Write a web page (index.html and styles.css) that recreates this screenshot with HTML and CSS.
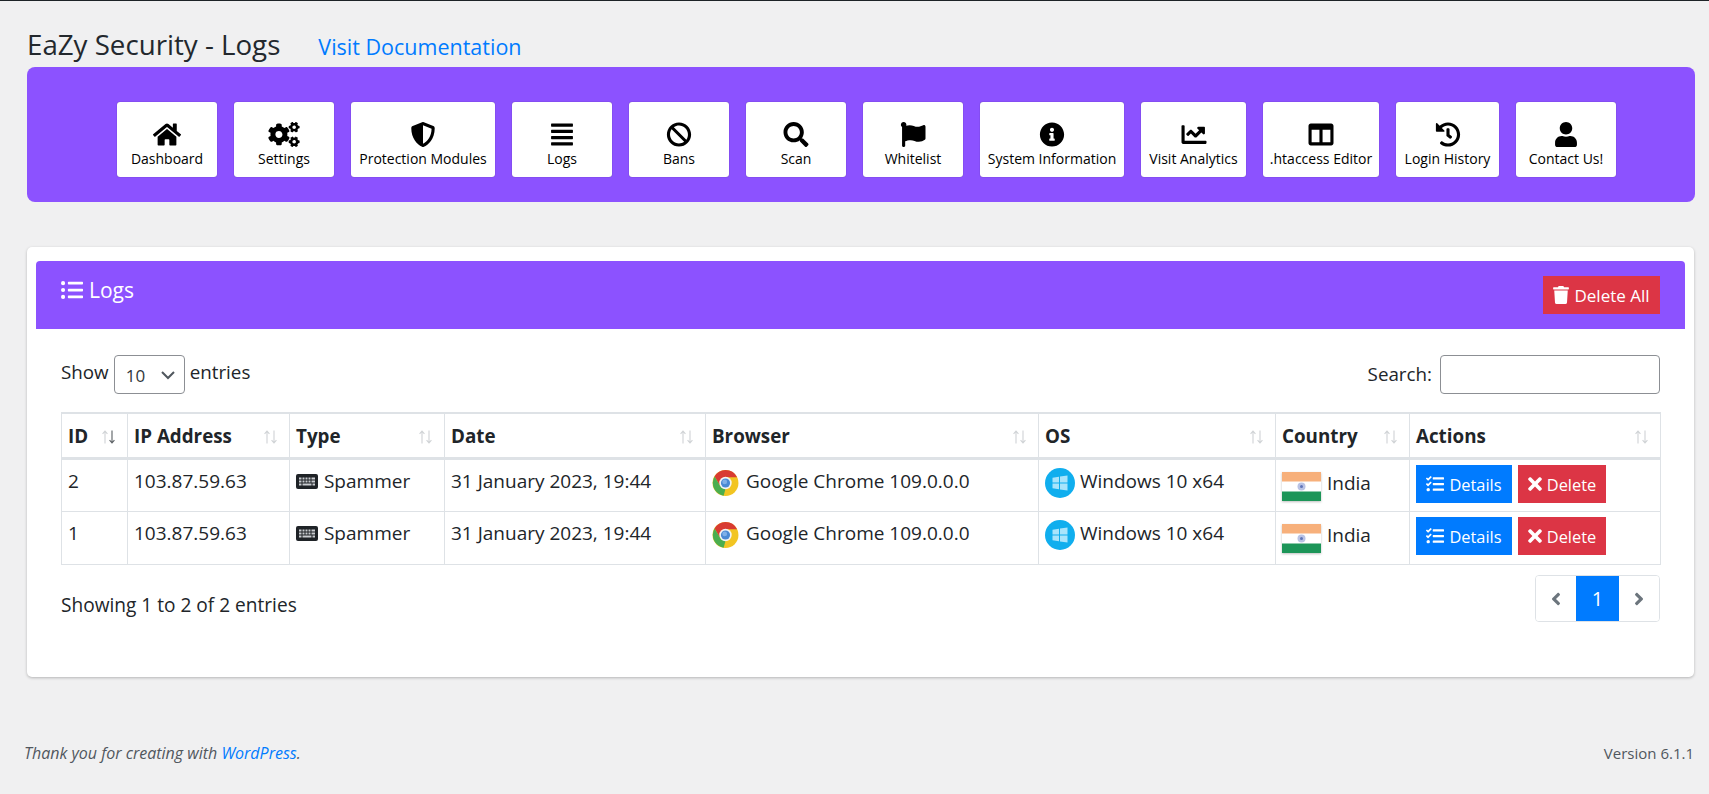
FILE: index.html
```html
<!DOCTYPE html>
<html lang="en">
<head>
<meta charset="utf-8">
<title>EaZy Security - Logs</title>
<link rel="stylesheet" href="styles.css">
</head>
<body>
<svg class="sprite" aria-hidden="true">
<symbol id="i-home" viewBox="0 0 576 512"><path d="M280.37 148.26L96 300.11V464a16 16 0 0 0 16 16l112.06-.29a16 16 0 0 0 15.92-16V368a16 16 0 0 1 16-16h64a16 16 0 0 1 16 16v95.64a16 16 0 0 0 16 16.05L464 480a16 16 0 0 0 16-16V300L295.67 148.26a12.19 12.19 0 0 0-15.3 0zM571.6 251.47L488 182.56V44.05a12 12 0 0 0-12-12h-56a12 12 0 0 0-12 12v72.61L318.47 43a48 48 0 0 0-61 0L4.34 251.47a12 12 0 0 0-1.6 16.9l25.5 31A12 12 0 0 0 45.15 301l235.22-193.74a12.19 12.19 0 0 1 15.3 0L530.9 301a12 12 0 0 0 16.9-1.6l25.5-31a12 12 0 0 0-1.7-16.93z"/></symbol>
<symbol id="i-cogs" viewBox="0 0 640 512"><path d="M512.1 191l-8.2 14.3c-3 5.3-9.4 7.5-15.1 5.4-11.8-4.4-22.6-10.7-32.1-18.6-4.6-3.8-5.8-10.5-2.8-15.7l8.2-14.3c-6.9-8-12.3-17.3-15.9-27.4h-16.5c-6 0-11.2-4.3-12.2-10.3-2-12-2.1-24.6 0-37.1 1-6 6.2-10.4 12.2-10.4h16.5c3.6-10.1 9-19.4 15.9-27.4l-8.2-14.3c-3-5.2-1.9-11.9 2.8-15.7 9.5-7.9 20.4-14.2 32.1-18.6 5.7-2.1 12.1.1 15.1 5.4l8.2 14.3c10.5-1.9 21.2-1.9 31.7 0L552 6.3c3-5.3 9.4-7.5 15.1-5.4 11.8 4.4 22.6 10.7 32.1 18.6 4.6 3.8 5.8 10.5 2.8 15.7l-8.2 14.3c6.9 8 12.3 17.3 15.9 27.4h16.5c6 0 11.2 4.3 12.2 10.3 2 12 2.1 24.6 0 37.1-1 6-6.2 10.4-12.2 10.4h-16.5c-3.6 10.1-9 19.4-15.9 27.4l8.2 14.3c3 5.2 1.9 11.9-2.8 15.7-9.5 7.9-20.4 14.2-32.1 18.6-5.7 2.1-12.1-.1-15.1-5.4l-8.2-14.3c-10.4 1.9-21.2 1.9-31.7 0zm-10.5-58.8c38.5 29.6 82.4-14.3 52.8-52.8-38.5-29.7-82.4 14.3-52.8 52.8zM386.3 286.1l33.7 16.8c10.1 5.8 14.5 18.1 10.5 29.1-8.9 24.2-26.4 46.4-42.6 65.8-7.4 8.9-20.2 11.1-30.3 5.3l-29.1-16.8c-16 13.7-34.6 24.6-54.9 31.7v33.6c0 11.6-8.3 21.6-19.7 23.6-24.6 4.2-50.4 4.4-75.9 0-11.5-2-20-11.9-20-23.6V418c-20.3-7.2-38.9-18-54.9-31.7L74 403c-10 5.8-22.9 3.6-30.3-5.3-16.2-19.4-33.3-41.6-42.2-65.7-4-10.9.4-23.2 10.5-29.1l33.3-16.8c-3.9-20.9-3.9-42.4 0-63.4L12 205.8c-10.1-5.8-14.6-18.1-10.5-29 8.9-24.2 26-46.4 42.2-65.8 7.4-8.9 20.2-11.1 30.3-5.3l29.1 16.8c16-13.7 34.6-24.6 54.9-31.7V57.1c0-11.5 8.2-21.5 19.6-23.5 24.6-4.2 50.5-4.4 76-.1 11.5 2 20 11.9 20 23.6v33.6c20.3 7.2 38.9 18 54.9 31.7l29.1-16.8c10-5.8 22.9-3.6 30.3 5.3 16.2 19.4 33.2 41.6 42.1 65.8 4 10.9.1 23.2-10 29.1l-33.7 16.8c3.9 21 3.9 42.5 0 63.5zm-117.6 21.1c59.2-77-28.7-164.9-105.7-105.7-59.2 77 28.7 164.9 105.7 105.7zm243.4 182.7l-8.2 14.3c-3 5.3-9.4 7.5-15.1 5.4-11.8-4.4-22.6-10.7-32.1-18.6-4.6-3.8-5.8-10.5-2.8-15.7l8.2-14.3c-6.9-8-12.3-17.3-15.9-27.4h-16.5c-6 0-11.2-4.3-12.2-10.3-2-12-2.1-24.6 0-37.1 1-6 6.2-10.4 12.2-10.4h16.5c3.6-10.1 9-19.4 15.9-27.4l-8.2-14.3c-3-5.2-1.9-11.9 2.8-15.7 9.5-7.9 20.4-14.2 32.1-18.6 5.7-2.1 12.1.1 15.1 5.4l8.2 14.3c10.5-1.9 21.2-1.9 31.7 0l8.2-14.3c3-5.3 9.4-7.5 15.1-5.4 11.8 4.4 22.6 10.7 32.1 18.6 4.6 3.8 5.8 10.5 2.8 15.7l-8.2 14.3c6.9 8 12.3 17.3 15.9 27.4h16.5c6 0 11.2 4.3 12.2 10.3 2 12 2.1 24.6 0 37.1-1 6-6.2 10.4-12.2 10.4h-16.5c-3.6 10.1-9 19.4-15.9 27.4l8.2 14.3c3 5.2 1.9 11.9-2.8 15.7-9.5 7.9-20.4 14.2-32.1 18.6-5.7 2.1-12.1-.1-15.1-5.4l-8.2-14.3c-10.4 1.9-21.2 1.9-31.7 0zM501.6 431c38.5 29.6 82.4-14.3 52.8-52.8-38.5-29.6-82.4 14.3-52.8 52.8z"/></symbol>
<symbol id="i-shield" viewBox="0 0 512 512"><path d="M466.5 83.7l-192-80a48.15 48.15 0 0 0-36.9 0l-192 80C27.7 91.1 16 108.6 16 128c0 198.5 114.5 335.7 221.5 380.3 11.8 4.9 25.1 4.9 36.9 0C360.1 472.6 496 349.3 496 128c0-19.4-11.7-36.9-29.5-44.3zM256.1 446.3l-.1-381 175.9 73.3c-3.3 151.4-82.1 261.1-175.8 307.7z"/></symbol>
<symbol id="i-justify" viewBox="0 0 448 512"><path d="M12 32h424a12 12 0 0 1 12 12v40a12 12 0 0 1-12 12H12A12 12 0 0 1 0 84V44a12 12 0 0 1 12-12zm0 128h424a12 12 0 0 1 12 12v40a12 12 0 0 1-12 12H12a12 12 0 0 1-12-12v-40a12 12 0 0 1 12-12zm0 128h424a12 12 0 0 1 12 12v40a12 12 0 0 1-12 12H12a12 12 0 0 1-12-12v-40a12 12 0 0 1 12-12zm0 128h424a12 12 0 0 1 12 12v40a12 12 0 0 1-12 12H12a12 12 0 0 1-12-12v-40a12 12 0 0 1 12-12z"/></symbol>
<symbol id="i-ban" viewBox="0 0 512 512"><path d="M256 8C119.034 8 8 119.033 8 256s111.034 248 248 248 248-111.034 248-248S392.967 8 256 8zm130.108 117.892c65.448 65.448 70 165.481 20.677 235.637L150.47 105.216c70.204-49.356 170.226-44.735 235.638 20.676zM125.892 386.108c-65.448-65.448-70-165.481-20.677-235.637L361.53 406.784c-70.203 49.356-170.226 44.736-235.638-20.676z"/></symbol>
<symbol id="i-search" viewBox="0 0 512 512"><path d="M505 442.7L405.3 343c-4.5-4.5-10.6-7-17-7H372c27.6-35.3 44-79.7 44-128C416 93.1 322.9 0 208 0S0 93.1 0 208s93.1 208 208 208c48.3 0 92.7-16.4 128-44v16.3c0 6.4 2.5 12.5 7 17l99.7 99.7c9.4 9.4 24.6 9.4 33.9 0l28.3-28.3c9.4-9.4 9.4-24.6.1-34zM208 336c-70.7 0-128-57.2-128-128 0-70.7 57.2-128 128-128 70.7 0 128 57.2 128 128 0 70.7-57.2 128-128 128z"/></symbol>
<symbol id="i-flag" viewBox="0 0 512 512"><path d="M349.565 98.783C295.978 98.783 251.721 64 184.348 64c-24.955 0-47.309 4.384-68.045 12.013a55.947 55.947 0 0 0 3.586-23.562C118.117 24.015 94.806 1.206 66.338.048 34.345-1.254 8 24.296 8 56c0 19.026 9.497 35.825 24 45.945V488c0 13.255 10.745 24 24 24h16c13.255 0 24-10.745 24-24v-94.4c28.311-12.064 63.582-22.122 114.435-22.122 53.588 0 97.844 34.783 165.217 34.783 48.169 0 86.667-16.294 122.505-40.858C506.84 359.452 512 349.571 512 339.045v-243.1c0-23.393-24.269-38.87-45.485-29.016-34.338 15.948-76.454 31.854-116.95 31.854z"/></symbol>
<symbol id="i-info" viewBox="0 0 512 512"><path d="M256 8C119.043 8 8 119.083 8 256c0 136.997 111.043 248 248 248s248-111.003 248-248C504 119.083 392.957 8 256 8zm0 110c23.196 0 42 18.804 42 42s-18.804 42-42 42-42-18.804-42-42 18.804-42 42-42zm56 254c0 6.627-5.373 12-12 12h-88c-6.627 0-12-5.373-12-12v-24c0-6.627 5.373-12 12-12h12v-64h-12c-6.627 0-12-5.373-12-12v-24c0-6.627 5.373-12 12-12h64c6.627 0 12 5.373 12 12v100h12c6.627 0 12 5.373 12 12v24z"/></symbol>
<symbol id="i-chart" viewBox="0 0 512 512"><path d="M496 384H64V80c0-8.84-7.16-16-16-16H16C7.16 64 0 71.16 0 80v336c0 17.67 14.33 32 32 32h464c8.84 0 16-7.16 16-16v-32c0-8.84-7.16-16-16-16zM464 96H345.94c-21.38 0-32.09 25.85-16.97 40.97l32.4 32.4L288 242.75l-73.37-73.37c-12.5-12.5-32.76-12.5-45.25 0l-68.69 68.69c-6.25 6.25-6.25 16.38 0 22.63l22.62 22.62c6.25 6.25 16.38 6.25 22.63 0L192 237.25l73.37 73.37c12.5 12.5 32.76 12.5 45.25 0l96-96 32.4 32.4c15.12 15.12 40.97 4.41 40.97-16.97V112c.01-8.84-7.15-16-16-16z"/></symbol>
<symbol id="i-columns" viewBox="0 0 512 512"><path d="M464 32H48C21.49 32 0 53.49 0 80v352c0 26.51 21.49 48 48 48h416c26.51 0 48-21.49 48-48V80c0-26.51-21.49-48-48-48zM224 416H64V160h160v256zm224 0H288V160h160v256z"/></symbol>
<symbol id="i-history" viewBox="0 0 512 512"><path d="M504 255.531c.253 136.64-111.18 248.372-247.82 248.468-59.015.042-113.223-20.53-155.822-54.911-11.077-8.94-11.905-25.541-1.839-35.607l11.267-11.267c8.609-8.609 22.353-9.551 31.891-1.984C173.062 425.135 212.781 440 256 440c101.705 0 184-82.311 184-184 0-101.705-82.311-184-184-184-48.814 0-93.149 18.969-126.068 49.932l50.754 50.754c10.08 10.08 2.941 27.314-11.313 27.314H24c-8.837 0-16-7.163-16-16V38.627c0-14.254 17.234-21.393 27.314-11.314l49.372 49.372C129.209 34.136 189.552 8 256 8c136.81 0 247.747 110.78 248 247.531zm-180.912 78.784l9.823-12.63c8.138-10.463 6.253-25.542-4.21-33.679L288 256.349V152c0-13.255-10.745-24-24-24h-16c-13.255 0-24 10.745-24 24v135.651l65.409 50.874c10.463 8.137 25.541 6.253 33.679-4.21z"/></symbol>
<symbol id="i-user" viewBox="0 0 448 512"><path d="M224 256c70.7 0 128-57.3 128-128S294.7 0 224 0 96 57.3 96 128s57.3 128 128 128zm89.6 32h-16.7c-22.2 10.2-46.9 16-72.9 16s-50.6-5.8-72.9-16h-16.7C60.2 288 0 348.2 0 422.4V464c0 26.5 21.5 48 48 48h352c26.5 0 48-21.5 48-48v-41.6c0-74.2-60.2-134.4-134.4-134.4z"/></symbol>
<symbol id="i-list" viewBox="0 0 512 512"><path d="M48 48a48 48 0 1 0 48 48 48 48 0 0 0-48-48zm0 160a48 48 0 1 0 48 48 48 48 0 0 0-48-48zm0 160a48 48 0 1 0 48 48 48 48 0 0 0-48-48zm448 16H176a16 16 0 0 0-16 16v32a16 16 0 0 0 16 16h320a16 16 0 0 0 16-16v-32a16 16 0 0 0-16-16zm0-320H176a16 16 0 0 0-16 16v32a16 16 0 0 0 16 16h320a16 16 0 0 0 16-16V80a16 16 0 0 0-16-16zm0 160H176a16 16 0 0 0-16 16v32a16 16 0 0 0 16 16h320a16 16 0 0 0 16-16v-32a16 16 0 0 0-16-16z"/></symbol>
<symbol id="i-trash" viewBox="0 0 448 512"><path d="M432 32H312l-9.4-18.7A24 24 0 0 0 281.1 0H166.8a23.72 23.72 0 0 0-21.4 13.3L136 32H16A16 16 0 0 0 0 48v32a16 16 0 0 0 16 16h416a16 16 0 0 0 16-16V48a16 16 0 0 0-16-16zM53.2 467a48 48 0 0 0 47.9 45h245.8a48 48 0 0 0 47.9-45L416 128H32z"/></symbol>
<symbol id="i-tasks" viewBox="0 0 512 512"><path d="M139.61 35.5a12 12 0 0 0-17 0L58.93 98.81l-22.7-22.12a12 12 0 0 0-17 0L3.53 92.41a12 12 0 0 0 0 17l47.59 47.4a12.78 12.78 0 0 0 17.61 0l15.59-15.62L156.52 69a12.09 12.09 0 0 0 .09-17zm0 159.19a12 12 0 0 0-17 0l-63.68 63.72-22.7-22.1a12 12 0 0 0-17 0L3.53 252a12 12 0 0 0 0 17L51 316.5a12.77 12.77 0 0 0 17.6 0l15.7-15.69 72.2-72.22a12 12 0 0 0 .09-16.9zM64 368c-26.49 0-48.59 21.5-48.59 48S37.53 464 64 464a48 48 0 0 0 0-96zm432 16H208a16 16 0 0 0-16 16v32a16 16 0 0 0 16 16h288a16 16 0 0 0 16-16v-32a16 16 0 0 0-16-16zm0-320H208a16 16 0 0 0-16 16v32a16 16 0 0 0 16 16h288a16 16 0 0 0 16-16V80a16 16 0 0 0-16-16zm0 160H208a16 16 0 0 0-16 16v32a16 16 0 0 0 16 16h288a16 16 0 0 0 16-16v-32a16 16 0 0 0-16-16z"/></symbol>
<symbol id="i-times" viewBox="0 0 352 512"><path d="M242.72 256l100.07-100.07c12.28-12.28 12.28-32.19 0-44.48l-22.24-22.24c-12.28-12.28-32.19-12.28-44.48 0L176 189.28 75.93 89.21c-12.28-12.28-32.19-12.28-44.48 0L9.21 111.45c-12.28 12.28-12.28 32.19 0 44.48L109.28 256 9.21 356.07c-12.28 12.28-12.28 32.19 0 44.48l22.24 22.24c12.28 12.28 32.2 12.28 44.48 0L176 322.72l100.07 100.07c12.28 12.28 32.2 12.28 44.48 0l22.24-22.24c12.28-12.28 12.28-32.19 0-44.48L242.72 256z"/></symbol>
<symbol id="i-left" viewBox="0 0 256 512"><path d="M31.7 239l136-136c9.4-9.4 24.6-9.4 33.9 0l22.6 22.6c9.4 9.4 9.4 24.6 0 33.9L127.9 256l96.4 96.4c9.4 9.4 9.4 24.6 0 33.9L201.7 409c-9.4 9.4-24.6 9.4-33.9 0l-136-136c-9.5-9.4-9.5-24.6-.1-34z"/></symbol>
<symbol id="i-right" viewBox="0 0 256 512"><path d="M224.3 273l-136 136c-9.4 9.4-24.6 9.4-33.9 0l-22.6-22.6c-9.4-9.4-9.4-24.6 0-33.9l96.4-96.4-96.4-96.4c-9.4-9.4-9.4-24.6 0-33.9L54.3 103c9.4-9.4 24.6-9.4 33.9 0l136 136c9.5 9.4 9.5 24.6.1 34z"/></symbol>
<symbol id="i-keyboard" viewBox="0 0 44 30"><rect width="44" height="30" rx="4" fill="#1f2327"/><path d="M6 7h5v4H6zM13 7h4v4h-4zM19 7h4v4h-4zM25 7h4v4h-4zM31 7h7v4h-7zM6 13h5v4H6zM13 13h4v4h-4zM19 13h4v4h-4zM25 13h4v4h-4zM31 13h7v4h-7zM6 19h5v4H6zM13 19h18v4H13zM33 19h5v4h-5z" fill="#c9ccd0"/></symbol>
<symbol id="i-sort" viewBox="0 0 13 14"><path d="M3 13.500V1M.6 3.800L3 1l2.400 2.800M10 .5V13M7.600 10.200L10 13l2.400-2.800" fill="none" stroke="#cfd2d5" stroke-width="1.100"/></symbol>
<symbol id="i-sort-down" viewBox="0 0 13 14"><path d="M3 13.500V1M.6 3.800L3 1l2.400 2.800" fill="none" stroke="#cfd2d5" stroke-width="1.100"/><path d="M10 .5V13M7.600 10.200L10 13l2.400-2.800" fill="none" stroke="#5a5f63" stroke-width="1.100"/></symbol>
<symbol id="i-chrome" viewBox="0 0 100 100"><circle cx="50" cy="50" r="48" fill="#f2c522"/><path d="M50 2a48 48 0 0 1 43 27H50L30 60 9.500 26A48 48 0 0 1 50 2z" fill="#d83b32"/><path d="M9.500 26L30 60l20 12-7 25.500A48 48 0 0 1 9.500 26z" fill="#4bae4f"/><circle cx="50" cy="50" r="23" fill="#f4f4f4"/><circle cx="50" cy="50" r="17" fill="#4a8ad4"/><circle cx="47" cy="46" r="9" fill="#7fb0e8"/></symbol>
<symbol id="i-windows" viewBox="0 0 30 30"><circle cx="15" cy="15" r="15" fill="#10aeee"/><path d="M7.500 9.800l6.500-1v5.700H7.500zM15 8.600l7.500-1.100v7H15zM7.500 15.500H14v5.700l-6.500-1zM15 15.500h7.500v7L15 21.400z" fill="#a9e4fb"/></symbol>
<symbol id="i-india" viewBox="0 0 39 29"><rect width="39" height="29" rx="1" fill="#fff"/><rect width="39" height="9.500" fill="#f7b07b"/><rect y="19.500" width="39" height="9.500" fill="#1c9558"/><circle cx="19.500" cy="14.500" r="4" fill="#b9c2e4"/><circle cx="19.500" cy="14.500" r="1.500" fill="#5f74b8"/></symbol>
</svg>

<div class="topline"></div>
<header class="head">
  <h1 class="title">EaZy Security - Logs</h1>
  <a class="doc" href="#">Visit Documentation</a>
</header>

<nav class="menu">
  <a class="tile" href="#"><svg class="ti"><use href="#i-home"/></svg><span>Dashboard</span></a>
  <a class="tile" href="#"><svg class="ti"><use href="#i-cogs"/></svg><span>Settings</span></a>
  <a class="tile w-144" href="#"><svg class="ti"><use href="#i-shield"/></svg><span>Protection Modules</span></a>
  <a class="tile" href="#"><svg class="ti"><use href="#i-justify"/></svg><span>Logs</span></a>
  <a class="tile" href="#"><svg class="ti"><use href="#i-ban"/></svg><span>Bans</span></a>
  <a class="tile" href="#"><svg class="ti"><use href="#i-search"/></svg><span>Scan</span></a>
  <a class="tile" href="#"><svg class="ti"><use href="#i-flag"/></svg><span>Whitelist</span></a>
  <a class="tile w-144" href="#"><svg class="ti"><use href="#i-info"/></svg><span>System Information</span></a>
  <a class="tile w-105" href="#"><svg class="ti"><use href="#i-chart"/></svg><span>Visit Analytics</span></a>
  <a class="tile w-116" href="#"><svg class="ti"><use href="#i-columns"/></svg><span>.htaccess Editor</span></a>
  <a class="tile w-103" href="#"><svg class="ti"><use href="#i-history"/></svg><span>Login History</span></a>
  <a class="tile" href="#"><svg class="ti"><use href="#i-user"/></svg><span>Contact Us!</span></a>
</nav>

<main class="card">
  <div class="card-head">
    <h2 class="card-title"><svg class="ci"><use href="#i-list"/></svg> Logs</h2>
    <a class="btn red big" href="#"><svg class="bt"><use href="#i-trash"/></svg> Delete All</a>
  </div>
  <div class="card-body">
    <div class="controls">
      <label class="len">Show <select class="sel"><option>10</option><option>25</option></select> entries</label>
      <label class="search">Search: <input class="inp" type="search"></label>
    </div>
    <table class="tbl">
      <colgroup>
        <col class="c1"><col class="c2"><col class="c3"><col class="c4"><col class="c5"><col class="c6"><col class="c7"><col class="c8">
      </colgroup>
      <thead>
        <tr>
          <th><div class="th"><span>ID</span><svg class="sort"><use href="#i-sort-down"/></svg></div></th>
          <th><div class="th"><span>IP Address</span><svg class="sort"><use href="#i-sort"/></svg></div></th>
          <th><div class="th"><span>Type</span><svg class="sort"><use href="#i-sort"/></svg></div></th>
          <th><div class="th"><span>Date</span><svg class="sort"><use href="#i-sort"/></svg></div></th>
          <th><div class="th"><span>Browser</span><svg class="sort"><use href="#i-sort"/></svg></div></th>
          <th><div class="th"><span>OS</span><svg class="sort"><use href="#i-sort"/></svg></div></th>
          <th><div class="th"><span>Country</span><svg class="sort"><use href="#i-sort"/></svg></div></th>
          <th><div class="th"><span>Actions</span><svg class="sort"><use href="#i-sort"/></svg></div></th>
        </tr>
      </thead>
      <tbody>
        <tr>
          <td>2</td><td>103.87.59.63</td>
          <td><svg class="kb"><use href="#i-keyboard"/></svg> Spammer</td>
          <td>31 January 2023, 19:44</td>
          <td><svg class="chrome"><use href="#i-chrome"/></svg> Google Chrome 109.0.0.0</td>
          <td><svg class="win"><use href="#i-windows"/></svg> Windows 10 x64</td>
          <td class="land"><svg class="india"><use href="#i-india"/></svg> India</td>
          <td class="acts"><div class="act-row"><a class="btn blue" href="#"><svg class="bi"><use href="#i-tasks"/></svg> Details</a><a class="btn red" href="#"><svg class="bx"><use href="#i-times"/></svg> Delete</a></div></td>
        </tr>
        <tr>
          <td>1</td><td>103.87.59.63</td>
          <td><svg class="kb"><use href="#i-keyboard"/></svg> Spammer</td>
          <td>31 January 2023, 19:44</td>
          <td><svg class="chrome"><use href="#i-chrome"/></svg> Google Chrome 109.0.0.0</td>
          <td><svg class="win"><use href="#i-windows"/></svg> Windows 10 x64</td>
          <td class="land"><svg class="india"><use href="#i-india"/></svg> India</td>
          <td class="acts"><div class="act-row"><a class="btn blue" href="#"><svg class="bi"><use href="#i-tasks"/></svg> Details</a><a class="btn red" href="#"><svg class="bx"><use href="#i-times"/></svg> Delete</a></div></td>
        </tr>
      </tbody>
    </table>
    <div class="tfoot">
      <div class="info">Showing 1 to 2 of 2 entries</div>
      <div class="pager">
        <a class="pg" href="#"><svg class="ang"><use href="#i-left"/></svg></a>
        <a class="pg on" href="#">1</a>
        <a class="pg" href="#"><svg class="ang"><use href="#i-right"/></svg></a>
      </div>
    </div>
  </div>
</main>

<footer class="foot">
  <span class="thanks">Thank you for creating with <a href="#">WordPress</a>.</span>
  <span class="ver">Version 6.1.1</span>
</footer>
</body>
</html>
```

FILE: styles.css
```css
* { box-sizing: border-box; }
html, body { margin: 0; padding: 0; }
body {
  background: #f0f0f1;
  color: #212529;
  font-family: "Open Sans", "Noto Sans", sans-serif;
  font-size: 18.8px;
  line-height: 27px;
  height: 794px;
  overflow: hidden;
}
a { text-decoration: none; color: #007bff; }
.sprite { display: block; width: 0; height: 0; overflow: hidden; }
svg { fill: currentColor; }
.topline { height: 1px; background: #1d2327; }

.head {
  display: flex;
  align-items: baseline;
  gap: 38px;
  height: 66px;
  padding: 23px 0 0 27px;
}
.title { margin: 0; font-size: 27.7px; font-weight: 400; line-height: 40px; color: #23282d; }
.doc { font-size: 21.5px; line-height: 40px; }

.menu {
  display: flex;
  gap: 17px;
  margin: 0 14px 0 27px;
  padding: 35px 0 25px 90px;
  height: 135px;
  background: #8c52ff;
  border-radius: 8px;
}
.tile {
  display: flex;
  flex-direction: column;
  align-items: center;
  width: 100px;
  flex: none;
  height: 75px;
  padding: 20px 0 0;
  background: #fff;
  border-radius: 3px;
  box-shadow: 0 0 1px rgba(0,0,0,.5);
  color: #000;
  font-size: 14px;
  line-height: 20px;
  white-space: nowrap;
}
.w-144 { width: 144px; }
.w-116 { width: 116px; }
.w-105 { width: 105px; }
.w-103 { width: 103px; }
.ti { width: 36px; height: 25px; margin-bottom: 2px; flex: none; }

.card {
  margin: 45px 15px 0 27px;
  height: 430px;
  padding: 14px 9px;
  background: #fff;
  border-radius: 5px;
  box-shadow: 0 1px 3px rgba(0,0,0,.25);
}
.card-head {
  display: flex;
  justify-content: space-between;
  height: 68px;
  padding: 15px 25px 0;
  background: #8c52ff;
  border-radius: 4px 4px 0 0;
  color: #fff;
}
.card-title {
  margin: -1px 0 0;
  font-size: 21px;
  font-weight: 400;
  line-height: 30px;
  display: flex;
  align-items: center;
  gap: 6px;
  height: 30px;
}
.ci { width: 22px; height: 22px; }
.btn {
  display: inline-flex;
  align-items: center;
  justify-content: center;
  height: 38px;
  color: #fff;
  font-size: 16.4px;
  white-space: nowrap;
}
.big { width: 117px; font-size: 17px; gap: 5px; }
.red { background: #dc3545; }
.blue { background: #007bff; }
.bt { width: 16px; height: 18px; }
.bi { width: 18px; height: 18px; margin-right: 5px; }
.bx { width: 14px; height: 20px; margin-right: 5px; }

.card-body { padding: 26px 25px 0; }
.controls { display: flex; justify-content: space-between; align-items: flex-start; height: 57px; }
.len { display: flex; align-items: flex-start; gap: 5px; line-height: 34px; }
.search { display: flex; gap: 8px; line-height: 38px; }
.sel {
  appearance: none;
  -webkit-appearance: none;
  width: 71px;
  height: 39px;
  padding: 3px 0 0 11px;
  border: 1px solid #8c8f94;
  border-radius: 4px;
  background: #fff url("data:image/svg+xml,%3Csvg xmlns='http://www.w3.org/2000/svg' width='14' height='14' viewBox='0 0 14 14'%3E%3Cpath d='M1 4l6 6 6-6' fill='none' stroke='%2350575e' stroke-width='2'/%3E%3C/svg%3E") no-repeat right 9px center;
  color: #32373c;
  font: inherit;
  font-size: 17px;
}
.inp {
  width: 220px;
  height: 39px;
  border: 1px solid #8c8f94;
  border-radius: 4px;
  background: #fff;
}

.tbl {
  width: 1599px;
  table-layout: fixed;
  border-collapse: collapse;
}
.c1 { width: 66px; }
.c2 { width: 162px; }
.c3 { width: 155px; }
.c4 { width: 261px; }
.c5 { width: 333px; }
.c6 { width: 237px; }
.c7 { width: 134px; }
.c8 { width: 251px; }
.tbl th, .tbl td { border: 1px solid #dee2e6; text-align: left; vertical-align: top; white-space: nowrap; }
.tbl th { border-top-width: 2px; border-bottom-width: 3px; height: 45px; padding: 9px 6px 7px; font-weight: 700; }
.tbl td { height: 53px; padding: 8px 6px; font-size: 19px; }
.th { display: flex; justify-content: space-between; align-items: center; padding-right: 6px; }
.sort { width: 13px; height: 14px; flex: none; }
.kb { width: 22px; height: 15px; vertical-align: -1px; margin-right: 1px; }
.chrome { width: 27px; height: 28px; vertical-align: middle; margin-right: 2px; }
.win { width: 30px; height: 30px; vertical-align: middle; }
.tbl td.land { padding-top: 9px; }
.india { width: 39px; height: 29px; vertical-align: middle; margin: 3px 1px 0 0; filter: drop-shadow(0 1px 1px rgba(0,0,0,.25)); }
.tbl td.acts { padding: 5px 6px 0; }
.act-row { display: flex; gap: 6px; }
.act-row .blue { width: 96px; }
.act-row .red { width: 88px; }

.tfoot { display: flex; justify-content: space-between; margin-top: 10px; }
.info { padding-top: 17px; font-size: 19.1px; }
.pager {
  display: flex;
  width: 125px;
  height: 47px;
  border: 1px solid #dee2e6;
  border-radius: 4px;
  overflow: hidden;
}
.pg { flex: 1; display: flex; align-items: center; justify-content: center; color: #6c757d; background: #fff; }
.pg.on { flex: none; width: 43px; background: #007bff; color: #fff; font-size: 20px; }
.ang { width: 12px; height: 20px; }

.foot {
  display: flex;
  justify-content: space-between;
  align-items: baseline;
  margin: 63px 15px 0 24px;
  font-size: 16px;
  color: #50575e;
}
.thanks { font-style: italic; }
.ver { font-size: 15px; }
```
